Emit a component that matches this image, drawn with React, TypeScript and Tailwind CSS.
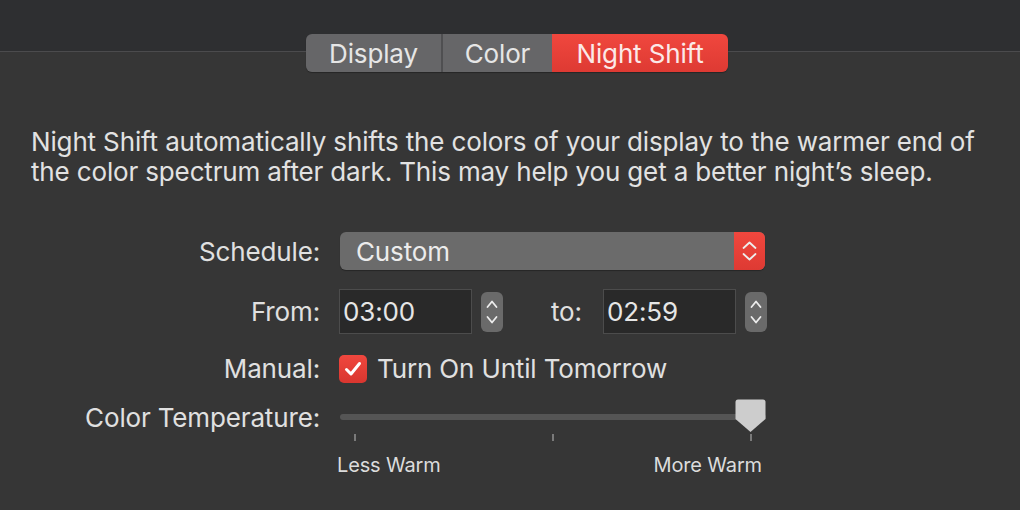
import React from 'react';

const font = { fontFamily: 'Inter, "Open Sans", sans-serif' };

const Stepper: React.FC<{ w?: number; gap?: number }> = ({ w = 11, gap = 12 }) => {
  const h = 6;
  const total = h * 2 + gap;
  return (
    <svg width={w + 2} height={total + 2} viewBox={`-1 -1 ${w + 2} ${total + 2}`}>
      <path d={`M0.5 ${h} L${w / 2} 0.5 L${w - 0.5} ${h}`} fill="none" stroke="#ededed" strokeWidth="1.8" strokeLinecap="round" strokeLinejoin="round" />
      <path d={`M0.5 ${h + gap} L${w / 2} ${total - 0.5} L${w - 0.5} ${h + gap}`} fill="none" stroke="#ededed" strokeWidth="1.8" strokeLinecap="round" strokeLinejoin="round" />
    </svg>
  );
};

const TimeField: React.FC<{ value: string }> = ({ value }) => (
  <div className="flex items-center">
    <div className="w-[133px] h-[45px] bg-[#292929] border border-[#4c4c4c] flex items-center pl-[3px] text-[26px] text-[#e6e6e6]">
      {value}
    </div>
    <div className="ml-[9px] w-[22px] h-[40px] rounded-[6px] bg-[#6a6a6a] flex items-center justify-center">
      <Stepper w={10} gap={10} />
    </div>
  </div>
);

export default function App() {
  return (
    <div className="w-[1020px] h-[510px] bg-[#363636] text-[#e0e0e0] overflow-hidden tracking-[-0.15px]" style={font}>
      <div className="h-[52px] bg-[#2e2f31] border-b border-[#4b4b4d]" />

      <div className="flex justify-center -mt-[18px] relative">
        <div className="ml-[14px] flex h-[38px] rounded-[6px] overflow-hidden text-[26px] text-[#e6e6e6] shadow-[0_1px_1px_rgba(0,0,0,0.3)]">
          <div className="w-[137px] bg-[#666668] flex items-center justify-center border-r-2 border-[#4f4f51]">Display</div>
          <div className="w-[109px] bg-[#666668] flex items-center justify-center">Color</div>
          <div className="w-[176px] bg-gradient-to-b from-[#f0473e] to-[#de3a33] flex items-center justify-center text-[#fbe9e8]">Night Shift</div>
        </div>
      </div>

      <p className="mt-[55px] ml-[31px] text-[26px] leading-[30px] text-[#e2e2e2]">
        Night Shift automatically shifts the colors of your display to the warmer end of
        <br />
        the color spectrum after dark. This may help you get a better night’s sleep.
      </p>

      <div className="mt-[45px] grid grid-cols-[320px_1fr] gap-x-[19px] text-[26px]">
        <div className="h-[38px] flex items-center justify-end">Schedule:</div>
        <div className="ml-[1px] w-[425px] h-[38px] rounded-[6px] bg-[#6b6b6b] flex overflow-hidden shadow-[0_1px_1px_rgba(0,0,0,0.3)]">
          <div className="flex-1 flex items-center pl-[16px] text-[#ececec]">Custom</div>
          <div className="w-[31px] bg-gradient-to-b from-[#f0473e] to-[#de3a33] flex items-center justify-center">
            <Stepper w={13} gap={6} />
          </div>
        </div>

        <div className="mt-[19px] h-[45px] flex items-center justify-end">From:</div>
        <div className="mt-[19px] flex items-center">
          <TimeField value="03:00" />
          <div className="ml-[48px] w-[52px]">to:</div>
          <TimeField value="02:59" />
        </div>

        <div className="mt-[20px] h-[29px] flex items-center justify-end">Manual:</div>
        <div className="mt-[20px] h-[29px] flex items-center">
          <div className="w-[28px] h-[28px] rounded-[5px] bg-gradient-to-b from-[#f0473e] to-[#d9362f] flex items-center justify-center">
            <svg width="18" height="16" viewBox="0 0 18 16">
              <path d="M2.5 8.5 L7 13 L15.5 2.5" fill="none" stroke="#ffffff" strokeWidth="3" strokeLinecap="round" strokeLinejoin="round" />
            </svg>
          </div>
          <span className="ml-[10px]">Turn On Until Tomorrow</span>
        </div>

        <div className="mt-[20px] h-[28px] flex items-center justify-end">Color Temperature:</div>
        <div className="mt-[20px] ml-[1px] w-[426px]">
          <div className="h-[28px] flex items-center relative">
            <div className="w-full h-[6px] rounded-full bg-[#555555]" />
            <svg width="31" height="34" viewBox="0 0 31 34" className="absolute right-0 top-[-4px]">
              <path d="M3 0.5 H28 Q30.5 0.5 30.5 3 V20 L15.5 33 L0.5 20 V3 Q0.5 0.5 3 0.5 Z" fill="#cdcdcd" />
            </svg>
          </div>
          <div className="flex justify-between px-[14px] mt-[3px] h-[8px]">
            <div className="w-[2px] h-[7px] bg-[#7a7a7a]" />
            <div className="w-[2px] h-[7px] bg-[#7a7a7a]" />
            <div className="w-[2px] h-[7px] bg-[#7a7a7a]" />
          </div>
          <div className="flex justify-between mt-[8px] -ml-[3px] mr-[4px] text-[20px] text-[#dcdcdc]">
            <span>Less Warm</span>
            <span>More Warm</span>
          </div>
        </div>
      </div>
    </div>
  );
}
